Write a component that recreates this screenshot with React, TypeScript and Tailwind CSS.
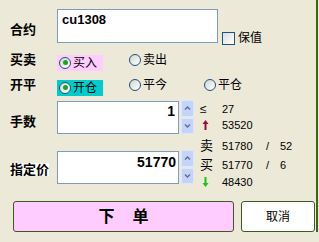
import React from "react";

const FONT = "font-['Liberation_Sans','Noto_Sans_CJK_SC',sans-serif]";

function Radio({
  label,
  checked = false,
  hl = "",
}: {
  label: string;
  checked?: boolean;
  hl?: string;
}) {
  return (
    <span className={`flex items-center h-4 pl-[2px] pr-[6px] ${hl}`}>
      <span className="flex items-center justify-center w-[12px] h-[12px] rounded-full border border-[#1C5180] bg-linear-to-br from-[#D6D6CE] to-white">
        {checked && (
          <span className="w-[5px] h-[5px] rounded-full bg-[#21A121]" />
        )}
      </span>
      <span className="ml-[2px] text-[12px] leading-4 text-black">{label}</span>
    </span>
  );
}

function Chevron({ up }: { up?: boolean }) {
  return (
    <svg width="7" height="5" viewBox="0 0 7 5">
      <path
        d={up ? "M1 3.5 L3.5 1 L6 3.5" : "M1 1.5 L3.5 4 L6 1.5"}
        fill="none"
        stroke="#5A6E98"
        strokeWidth="1.4"
      />
    </svg>
  );
}

function Spinner() {
  return (
    <div className="flex flex-col w-[13px] h-[34px] gap-px">
      <div className="flex-1 flex items-center justify-center rounded-[2px] border border-[#DCE6FC] bg-[#C3D3FA]">
        <Chevron up />
      </div>
      <div className="flex-1 flex items-center justify-center rounded-[2px] border border-[#DCE6FC] bg-[#C3D3FA]">
        <Chevron />
      </div>
    </div>
  );
}

function Arrow({ color, down }: { color: string; down?: boolean }) {
  return (
    <svg width="7" height="10" viewBox="0 0 7 10">
      <g transform={down ? "rotate(180 3.5 5)" : undefined}>
        <path d="M3.5 0 L6.5 4 L0.5 4 Z" fill={color} />
        <rect x="2.5" y="3" width="2" height="7" fill={color} />
      </g>
    </svg>
  );
}

function InfoRow({
  sym,
  value,
  extra,
  className,
}: {
  sym: React.ReactNode;
  value: string;
  extra?: string;
  className: string;
}) {
  return (
    <div className={`flex items-center ${className}`}>
      <div className="w-[24px] pl-[2px] flex items-center text-[13px] leading-4">
        {sym}
      </div>
      <div className="w-[44px] text-[11px] leading-4">{value}</div>
      {extra && (
        <>
          <div className="w-[14px] text-[11px] leading-4">/</div>
          <div className="text-[11px] leading-4">{extra}</div>
        </>
      )}
    </div>
  );
}

export default function App() {
  return (
    <div className={`w-[319px] h-[242px] bg-[#ECE9D8] text-black ${FONT}`}>
      <div className="w-[318px] h-[232px] border-r-2 border-[#3E6619] flex flex-col pl-[10px] pt-[9px]">
        {/* 合约 */}
        <div className="flex items-start h-[34px]">
          <div className="w-[47px] h-[34px] pt-[7px] flex items-center text-[13px] leading-4 font-bold">
            合约
          </div>
          <div className="w-[161px] h-[34px] border border-[#7F9DB9] bg-white pl-[4px] pt-[2px] text-[13px] leading-4 font-bold">
            cu1308
          </div>
          <div className="flex items-center ml-[4px] mt-[21px]">
            <span className="w-[13px] h-[13px] border border-[#1C5180] bg-linear-to-br from-[#DCDCD7] to-white" />
            <span className="ml-[3px] text-[12px] leading-4">保值</span>
          </div>
        </div>

        {/* 买卖 */}
        <div className="flex items-center h-4 mt-[9px]">
          <div className="w-[47px] text-[13px] leading-4 font-bold">买卖</div>
          <div className="w-[70px]">
            <span className="inline-flex">
              <Radio label="买入" checked hl="bg-[#FFCCFF]" />
            </span>
          </div>
          <Radio label="卖出" />
        </div>

        {/* 开平 */}
        <div className="flex items-center h-4 mt-[9px]">
          <div className="w-[47px] text-[13px] leading-4 font-bold">开平</div>
          <div className="w-[70px]">
            <span className="inline-flex">
              <Radio label="开仓" checked hl="bg-[#00CCCC]" />
            </span>
          </div>
          <div className="w-[75px]">
            <Radio label="平今" />
          </div>
          <Radio label="平仓" />
        </div>

        <div className="flex mt-[7px]">
          <div className="flex flex-col">
            {/* 手数 */}
            <div className="flex items-start h-[34px]">
              <div className="w-[47px] h-[34px] pt-[9px] flex items-center text-[13px] leading-4 font-bold">
                手数
              </div>
              <div className="w-[122px] h-[33px] mt-px border border-[#7F9DB9] bg-white pr-[3px] pt-[1px] text-right text-[14px] leading-4 font-bold">
                1
              </div>
              <div className="ml-[2px]">
                <Spinner />
              </div>
            </div>
            {/* 指定价 */}
            <div className="flex items-start h-[35px] mt-[16px]">
              <div className="w-[47px] h-[35px] pt-[4px] flex items-center">
                <span className="bg-white text-[13px] leading-[13px] font-bold">指定价</span>
              </div>
              <div className="w-[122px] h-[33px] mt-px border border-[#7F9DB9] bg-white pr-[2px] pt-[2px] text-right text-[14px] leading-4 font-bold">
                51770
              </div>
              <div className="ml-[2px]">
                <Spinner />
              </div>
            </div>
          </div>

          <div className="flex flex-col ml-[4px] pt-px">
            <InfoRow className="h-4" sym={<span className="text-[12px]">≤</span>} value="27" />
            <InfoRow className="h-4" sym={<span className="pl-[2px] flex"><Arrow color="#9B0A3C" /></span>} value="53520" />
            <InfoRow className="h-[25px]" sym="卖" value="51780" extra="52" />
            <InfoRow className="h-[14px]" sym="买" value="51770" extra="6" />
            <InfoRow className="h-[15px] mt-[2px]" sym={<span className="pl-[2px] flex"><Arrow color="#16C516" down /></span>} value="48430" />
          </div>
        </div>

        {/* buttons */}
        <div className="flex mt-[12px] pl-[3px]">
          <button
            type="button"
            className="w-[221px] h-[31px] rounded-[3px] border border-[#3E5A1E] bg-[#FFCCFF] flex items-center justify-center gap-[18px] text-[16px] font-bold"
          >
            <span>下</span>
            <span>单</span>
          </button>
          <button
            type="button"
            className="ml-[7px] w-[74px] h-[31px] rounded-[3px] border border-[#3E5A1E] bg-white flex items-center justify-center text-[12px]"
          >
            取消
          </button>
        </div>
      </div>
    </div>
  );
}
